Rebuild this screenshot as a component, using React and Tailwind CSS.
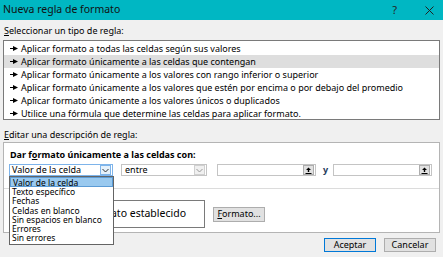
import React from 'react';

const rules = [
  'Aplicar formato a todas las celdas según sus valores',
  'Aplicar formato únicamente a las celdas que contengan',
  'Aplicar formato únicamente a los valores con rango inferior o superior',
  'Aplicar formato únicamente a los valores que estén por encima o por debajo del promedio',
  'Aplicar formato únicamente a los valores únicos o duplicados',
  'Utilice una fórmula que determine las celdas para aplicar formato.',
];

const options = [
  'Valor de la celda',
  'Texto específico',
  'Fechas',
  'Celdas en blanco',
  'Sin espacios en blanco',
  'Errores',
  'Sin errores',
];

function RuleArrow() {
  return (
    <svg width="8" height="5" viewBox="0 0 8 5" className="shrink-0">
      <rect x="0" y="2" width="4" height="1" fill="#000" />
      <path d="M3 0 L8 2.5 L3 5 Z" fill="#000" />
    </svg>
  );
}

function Chevron({ color = '#333' }) {
  return (
    <svg width="7" height="5" viewBox="0 0 7 5">
      <path d="M0.5 1 L3.5 4 L6.5 1" fill="none" stroke={color} strokeWidth="1" />
    </svg>
  );
}

function CollapseButton() {
  return (
    <div className="w-[11px] h-[10px] border border-[#adadad] bg-[#e1e1e1] flex items-center justify-center">
      <svg width="7" height="7" viewBox="0 0 7 7">
        <path d="M3.5 0.5 L6 3 L4.2 3 L4.2 5 L2.8 5 L2.8 3 L1 3 Z" fill="#000" />
        <rect x="0.5" y="6" width="6" height="1" fill="#000" />
      </svg>
    </div>
  );
}

export default function App() {
  return (
    <div className="relative w-[443px] h-[257px] overflow-hidden bg-[#f0f0f0] text-[9px] text-black" style={{ fontFamily: '"Noto Sans", "Open Sans", sans-serif' }}>
      {/* title bar */}
      <div className="h-[20px] bg-[#00b7c3] flex items-center justify-between pl-[3px] pr-[9px]">
        <span className="text-[10.5px] text-[#111]">Nueva regla de formato</span>
        <div className="flex items-center gap-[28px] text-[#222]">
          <span className="text-[11px]">?</span>
          <svg width="9" height="9" viewBox="0 0 9 9">
            <path d="M0.5 0.5 L8.5 8.5 M8.5 0.5 L0.5 8.5" stroke="#222" strokeWidth="1" />
          </svg>
        </div>
      </div>

      <div className="h-[20px] pl-[4px] pt-[1px] flex items-center">
        <span><span className="underline">S</span>eleccionar un tipo de regla:</span>
      </div>

      <div className="ml-[3px] w-[437px] h-[80px] border border-[#7a7a7a] bg-white py-[1px]">
        {rules.map((r, i) => (
          <div key={i} className={`h-[13px] flex items-center gap-[3px] pl-[6px] ${i === 1 ? 'bg-[#dedede]' : ''}`}>
            <RuleArrow />
            <span>{r}</span>
          </div>
        ))}
      </div>

      <div className="h-[22px] pl-[4px] flex items-end pb-[1px]">
        <span><span className="underline">E</span>ditar una descripción de regla:</span>
      </div>

      <div className="ml-[3px] w-[437px] h-[91px] border border-[#b4b4b4] bg-white flex flex-col">
        <div className="pl-[6px] pt-[5px] font-bold h-[21px]">
          Dar f<span className="underline">o</span>rmato únicamente a las celdas con:
        </div>
        <div className="flex items-center pl-[5px] h-[12px]">
          <div className="w-[104px] h-[12px] border border-[#7eb4ea] bg-white flex items-center justify-between">
            <span className="pl-[2px]">Valor de la celda</span>
            <div className="w-[11px] h-[10px] mr-[1px] border border-[#7eb4ea] bg-[#e5f1fb] flex items-center justify-center">
              <Chevron />
            </div>
          </div>
          <div className="ml-[8px] w-[86px] h-[12px] border border-[#c4c4c4] bg-white flex items-center justify-between">
            <span className="pl-[3px]">entre</span>
            <div className="w-[11px] h-[10px] mr-[1px] border border-[#d0d0d0] bg-[#f0f0f0] flex items-center justify-center">
              <Chevron color="#999" />
            </div>
          </div>
          <div className="ml-[10px] w-[99px] h-[12px] border border-[#c4c4c4] bg-white flex items-center justify-end pr-[1px]">
            <CollapseButton />
          </div>
          <span className="ml-[7px] w-[10px] text-[#1e395b] font-bold">y</span>
          <div className="w-[99px] h-[12px] border border-[#c4c4c4] bg-white flex items-center justify-end pr-[1px]">
            <CollapseButton />
          </div>
        </div>
        <div className="mt-[12px] h-px bg-[#dcdcdc]" />
        <div className="flex items-center pl-[36px] pt-[11px]">
          <div className="w-[165px] h-[28px] border border-[#7a7a7a] bg-white flex items-center justify-end pr-[18px] text-[10.5px]">
            Sin formato establecido
          </div>
          <button className="ml-[8px] w-[52px] h-[15px] border border-[#adadad] bg-[#e1e1e1] flex items-center justify-center">
            <span><span className="underline">F</span>ormato...</span>
          </button>
        </div>
      </div>

      <div className="flex justify-end gap-[8px] pr-[7px] pt-[5px]">
        <button className="w-[52px] h-[14px] border border-[#0078d7] bg-[#e1e1e1] flex items-center justify-center">Aceptar</button>
        <button className="w-[52px] h-[14px] border border-[#adadad] bg-[#e1e1e1] flex items-center justify-center">Cancelar</button>
      </div>

      {/* open dropdown list */}
      <div className="absolute left-[9px] top-[176px] w-[105px] border border-[#646464] bg-white pb-[1px] text-[8.5px]">
        {options.map((o, i) => (
          <div key={i} className={`leading-[9px] pl-[2px] ${i === 0 ? 'bg-[#99c9ef] border border-[#5b9bd5] h-[10px]' : 'h-[9.3px]'}`}>
            {o}
          </div>
        ))}
      </div>
    </div>
  );
}
